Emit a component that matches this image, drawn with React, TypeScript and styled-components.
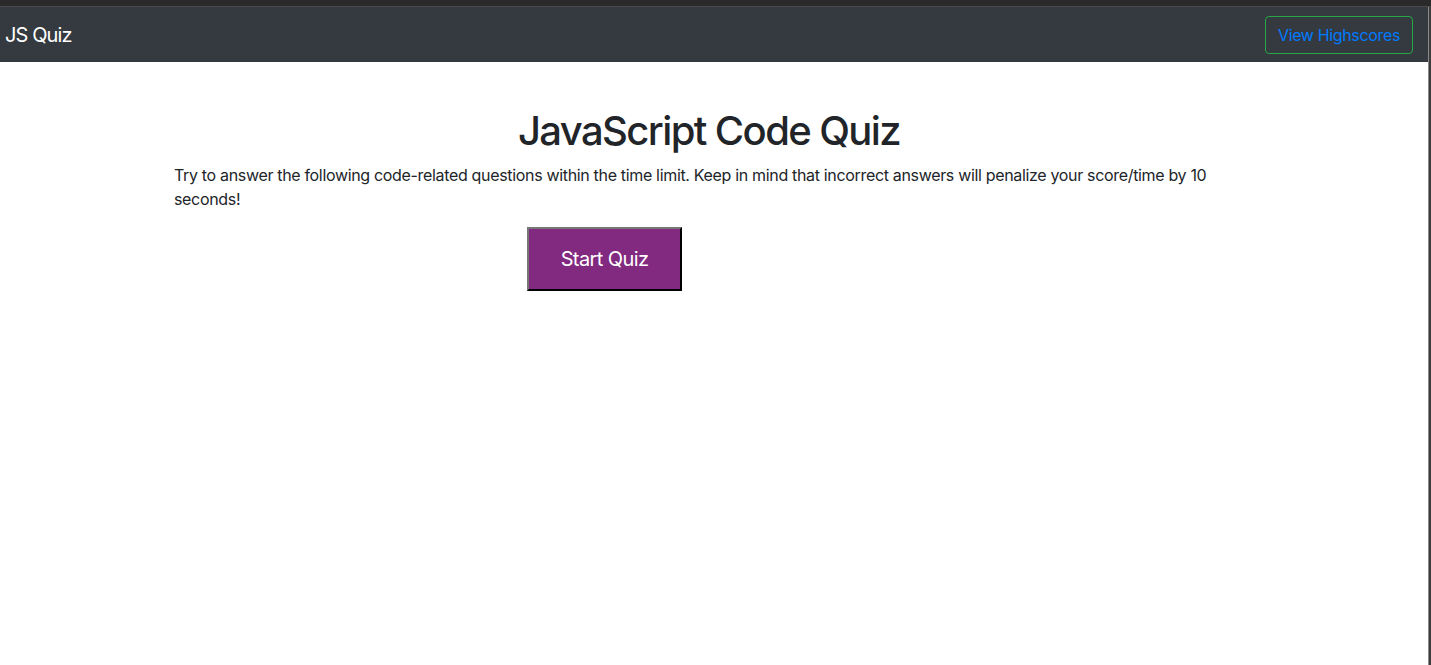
import * as React from 'react'
import styled, { createGlobalStyle } from 'styled-components'

const GlobalStyle = createGlobalStyle`
  html, body {
    margin: 0;
    padding: 0;
    background: #fff;
  }
  body {
    font-family: Inter, "Helvetica Neue", Arial, sans-serif;
    color: #212529;
    font-size: 16px;
    line-height: 1.5;
  }
`

export default function App() {
  return (
    <Frame>
      <GlobalStyle />
      <TopStrip />
      <Window>
        <Page>
          <Navbar>
            <Brand>JS Quiz</Brand>
            <OutlineButton>View Highscores</OutlineButton>
          </Navbar>
          <Content>
            <Title>JavaScript Code Quiz</Title>
            <Intro>
              Try to answer the following code-related questions within the time limit. Keep in mind that incorrect answers will penalize your score/time by 10 seconds!
            </Intro>
            <StartRow>
              <StartButton>Start Quiz</StartButton>
            </StartRow>
          </Content>
        </Page>
        <EdgeLine />
      </Window>
    </Frame>
  )
}

const Frame = styled.div`
  display: flex;
  flex-direction: column;
  height: 100vh;
  overflow: hidden;
`

const TopStrip = styled.div`
  flex: 0 0 7px;
  box-sizing: border-box;
  background: #2a2a2a;
  border-bottom: 1px solid #4a4a4a;
`

const Window = styled.div`
  flex: 1 1 0;
  display: flex;
`

const Page = styled.div`
  flex: 1 1 0;
  display: flex;
  flex-direction: column;
`

const EdgeLine = styled.div`
  flex: 0 0 3px;
  box-sizing: border-box;
  background: #3d3d3d;
  border-left: 1px solid #8a8a8a;
`

const Navbar = styled.nav`
  display: flex;
  align-items: center;
  justify-content: space-between;
  height: 55px;
  padding: 0 15px 0 5px;
  background: #343a40;
  box-sizing: border-box;
`

const Brand = styled.div`
  color: #fff;
  font-size: 20px;
  line-height: 30px;
  letter-spacing: -0.9px;
`

const OutlineButton = styled.button`
  font-family: inherit;
  font-size: 16px;
  line-height: 24px;
  letter-spacing: -0.35px;
  color: #007bff;
  background: transparent;
  border: 1px solid #28a745;
  border-radius: 4px;
  padding: 6px 12px;
  height: 38px;
  cursor: pointer;
`

const Content = styled.main`
  width: 1070px;
  margin-left: 174px;
  padding-top: 45px;
`

const Title = styled.h1`
  margin: 0 0 8px;
  font-size: 40px;
  font-weight: 500;
  line-height: 48px;
  letter-spacing: -1.6px;
  text-align: center;
  color: #212529;
`

const Intro = styled.p`
  margin: 0 0 16px;
  width: 1045px;
  font-size: 16px;
  line-height: 24px;
  letter-spacing: -0.33px;
`

const StartRow = styled.div`
  padding-left: 353px;
`

const StartButton = styled.button`
  font-family: inherit;
  width: 155px;
  height: 64px;
  font-size: 20px;
  letter-spacing: -0.6px;
  color: #fff;
  background: #812a7f;
  border: 2px outset #767676;
  border-top-color: #777;
  border-left-color: #777;
  border-right-color: #222;
  border-bottom-color: #222;
  cursor: pointer;
`
